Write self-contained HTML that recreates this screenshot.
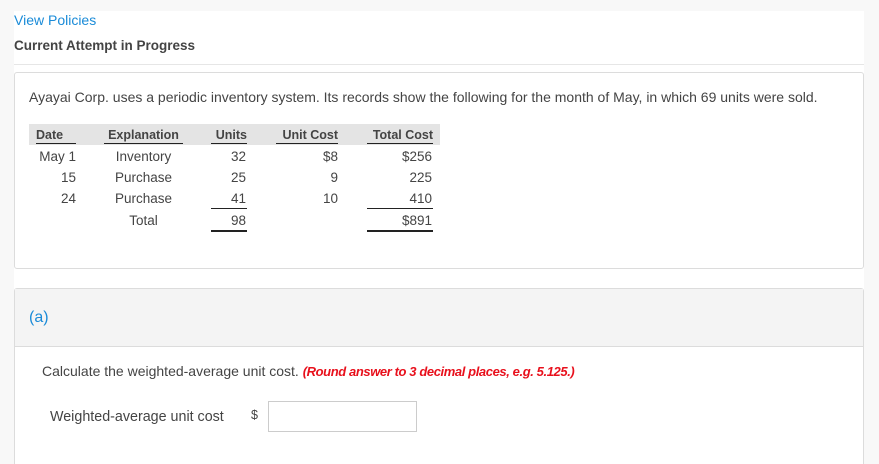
<!DOCTYPE html>
<html><head><style>
html,body{margin:0;width:879px;height:464px;overflow:hidden}
body{background:#f8f8f8;font-family:"Liberation Sans",sans-serif;color:#333;position:relative}
.a{position:absolute;white-space:nowrap}
.wh{position:absolute;left:14px;top:11px;width:850px;height:453px;background:#fff}
.card{position:absolute;border:1px solid #dcdcdc;border-radius:3px;background:#fff}
.t{position:absolute;font-size:13.5px;line-height:16px;color:#444}
.h{font-size:12.5px}
.r{text-align:right}.c{text-align:center}
.ul{border-bottom:1px solid #222}
</style></head><body>
<div class="wh"></div>
<div class="a" style="left:14px;top:12px;font-size:14px;color:#1a8bd8">View Policies</div>
<div class="a" style="left:14px;top:38px;font-size:13.5px;font-weight:bold;color:#444">Current Attempt in Progress</div>
<div class="a" style="left:14px;top:64px;width:850px;height:1px;background:#e6e6e6"></div>
<div class="card" style="left:14px;top:72px;width:848px;height:195px"></div>
<div class="a" style="left:29px;top:89px;font-size:14px;color:#444">Ayayai Corp. uses a periodic inventory system. Its records show the following for the month of May, in which 69 units were sold.</div>
<div class="a" style="left:29px;top:124px;width:411px;height:21px;background:#e4e4e4"></div>
<div class="t h" style="left:36px;top:127px;font-weight:bold;width:40px"><span class="ul" style="display:inline-block;width:40px">Date</span></div>
<div class="t h c" style="left:104px;top:127px;font-weight:bold;width:79px"><span class="ul" style="display:inline-block;width:79px">Explanation</span></div>
<div class="t h r" style="left:211px;top:127px;font-weight:bold;width:36px"><span class="ul" style="display:inline-block;width:36px">Units</span></div>
<div class="t h r" style="left:276px;top:127px;font-weight:bold;width:62px"><span class="ul" style="display:inline-block;width:62px">Unit Cost</span></div>
<div class="t h r" style="left:367px;top:127px;font-weight:bold;width:66px"><span class="ul" style="display:inline-block;width:66px">Total Cost</span></div>

<div class="t r" style="left:30px;top:149px;width:46px">May 1</div>
<div class="t r" style="left:30px;top:170px;width:46px">15</div>
<div class="t r" style="left:30px;top:191px;width:46px">24</div>
<div class="t c" style="left:100px;top:149px;width:87px">Inventory</div>
<div class="t c" style="left:100px;top:170px;width:87px">Purchase</div>
<div class="t c" style="left:100px;top:191px;width:87px">Purchase</div>
<div class="t c" style="left:100px;top:213px;width:87px">Total</div>
<div class="t r" style="left:211px;top:149px;width:35px">32</div>
<div class="t r" style="left:211px;top:170px;width:35px">25</div>
<div class="t r" style="left:211px;top:191px;width:35px">41</div>
<div class="t r" style="left:211px;top:213px;width:35px">98</div>
<div class="t r" style="left:276px;top:149px;width:62px">$8</div>
<div class="t r" style="left:276px;top:170px;width:62px">9</div>
<div class="t r" style="left:276px;top:191px;width:62px">10</div>
<div class="t r" style="left:367px;top:149px;width:65px">$256</div>
<div class="t r" style="left:367px;top:170px;width:65px">225</div>
<div class="t r" style="left:367px;top:191px;width:65px">410</div>
<div class="t r" style="left:367px;top:213px;width:65px">$891</div>
<div class="a" style="left:211px;top:208px;width:36px;height:1px;background:#222"></div>
<div class="a" style="left:367px;top:208px;width:66px;height:1px;background:#222"></div>
<div class="a" style="left:211px;top:230px;width:36px;height:2px;background:#222"></div>
<div class="a" style="left:367px;top:230px;width:66px;height:2px;background:#222"></div>

<div class="card" style="left:14px;top:288px;width:848px;height:190px"></div>
<div class="a" style="left:15px;top:289px;width:848px;height:57px;background:#f4f4f4;border-bottom:1px solid #dcdcdc"></div>
<div class="a" style="left:29px;top:309px;font-size:16px;color:#1a8bd8">(a)</div>
<div class="a" style="left:42px;top:363px;font-size:14px;color:#444">Calculate the weighted-average unit cost. <b style="color:#e8101c;font-style:italic;font-size:13px;letter-spacing:-0.4px">(Round answer to 3 decimal places, e.g. 5.125.)</b></div>
<div class="a" style="left:50px;top:409px;font-size:14.3px;color:#444">Weighted-average unit cost</div>
<div class="a" style="left:251px;top:408px;font-size:12.5px;color:#444">$</div>
<div class="a" style="left:268px;top:401px;width:147px;height:29px;border:1px solid #ccc;background:#fff"></div>
</body></html>
